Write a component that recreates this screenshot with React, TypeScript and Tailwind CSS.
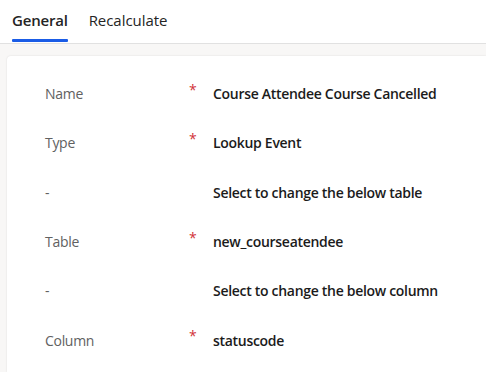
import React from "react";

const rows = [
  { label: "Name", req: true, value: "Course Attendee Course Cancelled" },
  { label: "Type", req: true, value: "Lookup Event" },
  { label: "-", req: false, value: "Select to change the below table" },
  { label: "Table", req: true, value: "new_courseatendee" },
  { label: "-", req: false, value: "Select to change the below column" },
  { label: "Column", req: true, value: "statuscode" },
];

export default function App() {
  return (
    <div
      className="w-[486px] h-[372px] overflow-hidden bg-white flex flex-col"
      style={{ fontFamily: '"Segoe UI", "Open Sans", "Noto Sans", sans-serif' }}
    >
      <div className="h-[44px] shrink-0 flex items-end border-b border-[#e1e1e1] pl-[12px] gap-[21px]">
        <div className="flex flex-col">
          <span className="text-[15px] font-semibold text-[#242424] leading-[20px] tracking-[-0.2px]">General</span>
          <div className="mt-[9px] h-[3px] bg-[#1a5ce6] rounded-[1px] mb-[1px]" />
        </div>
        <div className="flex flex-col">
          <span className="text-[15px] text-[#242424] leading-[20px] tracking-[-0.05px]">Recalculate</span>
          <div className="mt-[9px] h-[3px] mb-[1px]" />
        </div>
      </div>
      <div className="flex-1 bg-[#f8f7f6] pl-[7px] pt-[12px]">
        <div className="h-full bg-white rounded-tl-[4px] shadow-[0_0_2px_rgba(0,0,0,0.12)] pt-[13px]">
          {rows.map((r, i) => (
            <div key={i} className="h-[49.3px] flex items-center">
              <div className="w-[182px] pl-[38px] text-[14px] text-[#616161] tracking-[-0.3px]">{r.label}</div>
              <div className="w-[24px] text-[14px] text-[#d13438] self-start pt-[10px]">{r.req ? "*" : ""}</div>
              <div className="text-[14px] font-semibold text-[#1b1b1b] tracking-[-0.3px]">{r.value}</div>
            </div>
          ))}
        </div>
      </div>
    </div>
  );
}
